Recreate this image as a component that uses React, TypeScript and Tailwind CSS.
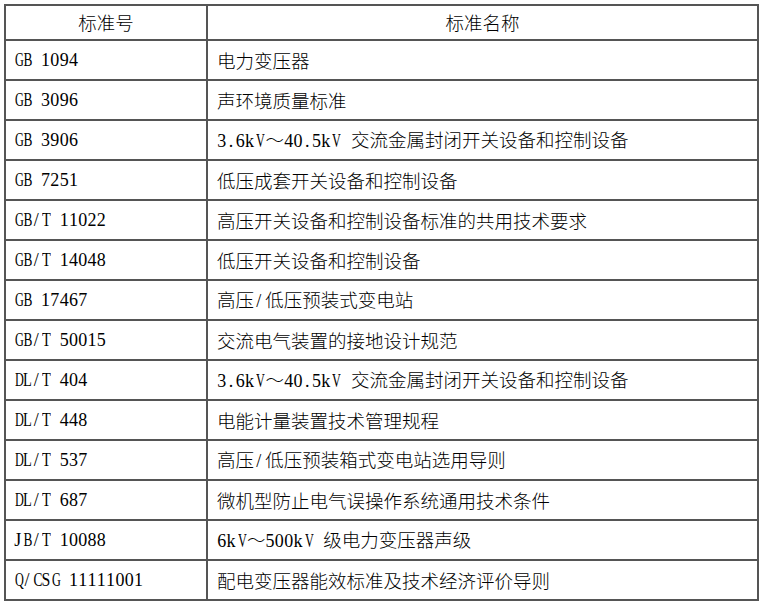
const rows: [string, string][] = [
  ["GB 1094", "电力变压器"],
  ["GB 3096", "声环境质量标准"],
  ["GB 3906", "3.6kV～40.5kV 交流金属封闭开关设备和控制设备"],
  ["GB 7251", "低压成套开关设备和控制设备"],
  ["GB/T 11022", "高压开关设备和控制设备标准的共用技术要求"],
  ["GB/T 14048", "低压开关设备和控制设备"],
  ["GB 17467", "高压/低压预装式变电站"],
  ["GB/T 50015", "交流电气装置的接地设计规范"],
  ["DL/T 404", "3.6kV～40.5kV 交流金属封闭开关设备和控制设备"],
  ["DL/T 448", "电能计量装置技术管理规程"],
  ["DL/T 537", "高压/低压预装箱式变电站选用导则"],
  ["DL/T 687", "微机型防止电气误操作系统通用技术条件"],
  ["JB/T 10088", "6kV～500kV 级电力变压器声级"],
  ["Q/CSG 11111001", "配电变压器能效标准及技术经济评价导则"],
];

// Times capitals are wider than a half-width slot, squeeze them like the song face's ascii
const squeeze: Record<string, string> = {
  G: "scale-x-[0.68]",
  D: "scale-x-[0.68]",
  Q: "scale-x-[0.68]",
  V: "scale-x-[0.68]",
  B: "scale-x-[0.74]",
  C: "scale-x-[0.74]",
  T: "scale-x-[0.8]",
  L: "scale-x-[0.8]",
  S: "scale-x-[0.88]",
};

function Mixed({ text }: { text: string }) {
  const parts = text.match(/[\x20-\x7e]+|[^\x20-\x7e]+/g) ?? [];
  return (
    <>
      {parts.map((p, i) =>
        /^[\x20-\x7e]+$/.test(p) ? (
          <span key={i} className="font-['Liberation_Serif',serif] text-[18px]">
            {p.split("").map((c, j) => (
              <span key={j} className="inline-block w-[9.3px] text-center whitespace-pre">
                <span className={"inline-block " + (squeeze[c] ?? "")}>{c}</span>
              </span>
            ))}
          </span>
        ) : (
          <span
            key={i}
            className={
              "font-['Noto_Sans_CJK_SC',sans-serif] text-[18.5px] font-light" + (i > 0 ? " ml-[2px]" : "")
            }
          >
            {p}
          </span>
        )
      )}
    </>
  );
}

export default function App() {
  return (
    <div className="bg-white w-[762px] h-[603px] pt-[4px] pl-[4px]">
      <table className="w-[755px] border-collapse border-2 border-[#1f1f1f] text-black table-fixed">
        <colgroup>
          <col className="w-[202px]" />
          <col />
        </colgroup>
        <thead>
          <tr className="h-[35px]">
            <th className="border-2 border-[#555] font-normal text-center align-middle leading-none">
              <Mixed text="标准号" />
            </th>
            <th className="border-2 border-[#555] font-normal text-center align-middle leading-none">
              <Mixed text="标准名称" />
            </th>
          </tr>
        </thead>
        <tbody>
          {rows.map(([code, name]) => (
            <tr key={code + name} className="h-[40px]">
              <td className="border-2 border-[#555] pl-[7px] align-middle leading-none">
                <Mixed text={code} />
              </td>
              <td className="border-2 border-[#555] pl-[9px] align-middle leading-none">
                <Mixed text={name} />
              </td>
            </tr>
          ))}
        </tbody>
      </table>
    </div>
  );
}
